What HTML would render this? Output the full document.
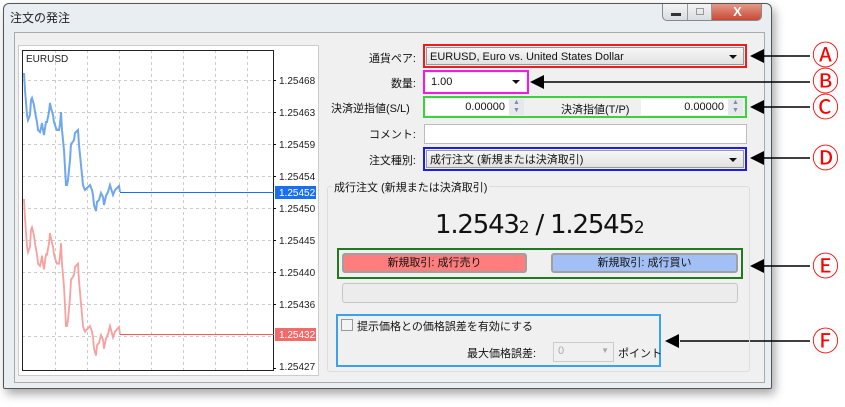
<!DOCTYPE html>
<html><head><meta charset="utf-8"><style>
*{box-sizing:border-box;margin:0;padding:0}
body{width:845px;height:407px;background:#fff;position:relative;overflow:hidden;font-family:"Liberation Sans","Noto Sans CJK JP",sans-serif;font-size:11px;color:#111}
.a{position:absolute}
.win{left:3px;top:3px;width:769px;height:386px;background:#e9eef3;border:1px solid #555;border-radius:6px 6px 2px 2px;box-shadow:3px 5px 10px rgba(0,0,0,.35)}
.client{left:14px;top:32px;width:751px;height:351px;background:#f0f0f0;border:1px solid #aaa}
.lbl{text-align:right;width:110px;left:306px}
.field{background:#fff;border:1px solid #bbb}
.combo{background:linear-gradient(#f6f6f6,#e2e2e2);border:1px solid #999;line-height:14px}
.tri{position:absolute;right:6px;top:7px;width:0;height:0;border-left:4px solid transparent;border-right:4px solid transparent;border-top:4px solid #111}
.circ{font-size:27px;color:#f00;left:812px;line-height:1;font-family:"DejaVu Sans",sans-serif}
</style></head><body>
<div class="a win"></div>
<div class="a" style="left:10px;top:9px;font-size:12px;color:#222">注文の発注</div>
<div class="a" style="left:662px;top:4px;width:100px;height:17px;border:1px solid #888;border-top:none;border-radius:0 0 5px 5px;background:linear-gradient(#f4f4f4,#d8dde2);overflow:hidden">
 <div class="a" style="left:0;top:0;width:25px;height:17px;border-right:1px solid #999"><div class="a" style="left:8px;top:9px;width:10px;height:3px;background:#333"></div></div>
 <div class="a" style="left:25px;top:0;width:24px;height:17px;border-right:1px solid #999"><div class="a" style="left:8px;top:4px;width:8px;height:7px;border:1px solid #999"></div></div>
 <div class="a" style="left:49px;top:0;width:51px;height:17px;background:linear-gradient(#e49a8a,#c7432f);color:#fff;font-weight:bold;font-size:13px;text-align:center;line-height:16px">X</div>
</div>
<div class="a client"></div>
<div class="a" style="left:18px;top:45px;width:301px;height:331px;background:#fff;border:1px solid #ccc"></div>
<svg class="a" style="left:0;top:0" width="845" height="407">
 <g stroke="#ccc" stroke-dasharray="3,3" stroke-width="1">
  <line x1="55.5" y1="50" x2="55.5" y2="370"/><line x1="87.5" y1="50" x2="87.5" y2="370"/><line x1="119.5" y1="50" x2="119.5" y2="370"/><line x1="151.5" y1="50" x2="151.5" y2="370"/><line x1="183.5" y1="50" x2="183.5" y2="370"/><line x1="215.5" y1="50" x2="215.5" y2="370"/><line x1="247.5" y1="50" x2="247.5" y2="370"/>
  <line x1="22" y1="80.5" x2="273" y2="80.5"/><line x1="22" y1="112.5" x2="273" y2="112.5"/><line x1="22" y1="144.5" x2="273" y2="144.5"/><line x1="22" y1="176.5" x2="273" y2="176.5"/><line x1="22" y1="208.5" x2="273" y2="208.5"/><line x1="22" y1="240.5" x2="273" y2="240.5"/><line x1="22" y1="272.5" x2="273" y2="272.5"/><line x1="22" y1="304.5" x2="273" y2="304.5"/><line x1="22" y1="336.5" x2="273" y2="336.5"/>
 </g>
 <rect x="22.5" y="50.5" width="251" height="320" fill="none" stroke="#222"/>
 <g stroke="#111"><line x1="273" y1="80.5" x2="276" y2="80.5"/><line x1="273" y1="112.5" x2="276" y2="112.5"/><line x1="273" y1="144.5" x2="276" y2="144.5"/><line x1="273" y1="176.5" x2="276" y2="176.5"/><line x1="273" y1="208.5" x2="276" y2="208.5"/><line x1="273" y1="240.5" x2="276" y2="240.5"/><line x1="273" y1="272.5" x2="276" y2="272.5"/><line x1="273" y1="304.5" x2="276" y2="304.5"/><line x1="273" y1="368.5" x2="276" y2="368.5"/></g>
 <polyline fill="none" stroke="#6fa6f0" stroke-width="2" points="24,73 25,90 27,115 28,120 30,115 31,100 32,98 34,105 35,112 37,122 38,130 40,132 41,128 42,123 43,130 44,135 45,128 46,122 47,122 49,112 50,103 51,108 53,115 54,122 56,128 57,130 59,130 60,124 61,112 62,130 64,150 66,185 67,185 68,180 70,160 71,144 72,143 74,140 75,133 78,130 79,145 81,165 83,185 84,188 85,190 87,188 90,185 92,190 93,195 94,205 96,211 97,202 99,200 101,193 103,197 104,205 106,196 108,192 110,185 113,195 115,190 119,186 120,192"/>
 <line x1="120" y1="192.5" x2="274" y2="192.5" stroke="#1a6ff0"/>
 <g transform="translate(0,199) scale(1,1.134) translate(0,-73)"><polyline fill="none" stroke="#f7a0a0" stroke-width="1.8" points="24,73 25,90 27,115 28,120 30,115 31,100 32,98 34,105 35,112 37,122 38,130 40,132 41,128 42,123 43,130 44,135 45,128 46,122 47,122 49,112 50,103 51,108 53,115 54,122 56,128 57,130 59,130 60,124 61,112 62,130 64,150 66,185 67,185 68,180 70,160 71,144 72,143 74,140 75,133 78,130 79,145 81,165 83,185 84,188 85,190 87,188 90,185 92,190 93,195 94,205 96,211 97,202 99,200 101,193 103,197 104,205 106,196 108,192 110,185 113,195 115,190 119,186 120,192"/></g>
 <line x1="120" y1="334.5" x2="274" y2="334.5" stroke="#f05a5a"/>
 <rect x="275" y="186" width="41" height="13" fill="#1a6ff0"/>
 <rect x="275" y="328" width="41" height="13" fill="#f26b6b"/>
 <g font-family="Liberation Sans,sans-serif" font-size="10" fill="#222">
  <text x="26" y="62" font-size="10">EURUSD</text>
  <text x="279" y="84">1.25468</text><text x="279" y="116">1.25463</text><text x="279" y="148">1.25459</text><text x="279" y="180">1.25454</text>
  <text x="279" y="196" fill="#fff">1.25452</text>
  <text x="279" y="212">1.25450</text><text x="279" y="244">1.25445</text><text x="279" y="276">1.25440</text><text x="279" y="308">1.25436</text>
  <text x="279" y="338" fill="#fff">1.25432</text><text x="279" y="370">1.25427</text>
 </g>
 <g stroke="#000" stroke-width="1.5"><line x1="760" y1="56" x2="810" y2="56"/><line x1="540" y1="82" x2="810" y2="82"/><line x1="760" y1="107" x2="810" y2="107"/><line x1="760" y1="158" x2="810" y2="158"/><line x1="760" y1="266" x2="810" y2="266"/><line x1="680" y1="341" x2="810" y2="341"/></g>
 <g fill="#000"><polygon points="750,56 764,49 764,63"/><polygon points="530,82 544,75 544,89"/><polygon points="750,107 764,100 764,114"/><polygon points="750,158 764,151 764,165"/><polygon points="750,266 764,259 764,273"/><polygon points="665,341 679,334 679,348"/></g>
</svg>
<div class="a circ" style="top:43px">Ⓐ</div>
<div class="a circ" style="top:69px">Ⓑ</div>
<div class="a circ" style="top:95px">Ⓒ</div>
<div class="a circ" style="top:146px">Ⓓ</div>
<div class="a circ" style="top:254px">Ⓔ</div>
<div class="a circ" style="top:329px">Ⓕ</div>

<div class="a lbl" style="top:50px">通貨ペア:</div>
<div class="a lbl" style="top:75px">数量:</div>
<div class="a" style="left:331px;top:100px">決済逆指値(S/L)</div>
<div class="a lbl" style="top:126px">コメント:</div>
<div class="a lbl" style="top:152px">注文種別:</div>

<div class="a" style="left:423px;top:44px;width:324px;height:24px;border:2px solid #f01c1c"><div class="a combo" style="left:1px;top:1px;right:1px;bottom:1px;padding:2px 3px">EURUSD, Euro vs. United States Dollar<div class="tri"></div></div></div>
<div class="a" style="left:423px;top:70px;width:106px;height:24px;border:2px solid #f01ce6"><div class="a field" style="left:1px;top:1px;right:1px;bottom:1px;border:none;padding:3px 5px">1.00<div class="tri"></div></div></div>
<div class="a" style="left:423px;top:96px;width:324px;height:22px;border:2px solid #3cd23c;background:#f0f0f0">
 <div class="a field" style="left:1px;top:1px;width:83px;height:16px;border:none;text-align:right;padding:2px 4px">0.00000</div>
 <div class="a" style="left:84px;top:1px;width:15px;height:16px;background:#e6e8ec;color:#7a8fb0;font-size:7px;text-align:center;line-height:8px">▲<br>▼</div>
 <div class="a" style="left:136px;top:3px">決済指値(T/P)</div>
 <div class="a field" style="left:216px;top:1px;width:87px;height:16px;border:none;text-align:right;padding:2px 4px">0.00000</div>
 <div class="a" style="left:303px;top:1px;width:15px;height:16px;background:#e6e8ec;color:#7a8fb0;font-size:7px;text-align:center;line-height:8px">▲<br>▼</div>
</div>
<div class="a field" style="left:424px;top:124px;width:323px;height:20px"></div>
<div class="a" style="left:423px;top:147px;width:324px;height:24px;border:2px solid #1c1cf0"><div class="a combo" style="left:1px;top:1px;right:1px;bottom:1px;padding:2px 3px">成行注文 (新規または決済取引)<div class="tri"></div></div></div>

<div class="a" style="left:327px;top:186px;width:423px;height:186px;border:1px solid #ddd;border-radius:3px"></div>
<div class="a" style="left:332px;top:179px;background:#f0f0f0;padding:0 2px">成行注文 (新規または決済取引)</div>
<div class="a" style="left:435px;top:210px;font-size:26px;font-family:'DejaVu Sans',sans-serif;letter-spacing:-1.2px;color:#111">1.2543<span style="font-size:17px">2</span> / 1.2545<span style="font-size:17px">2</span></div>

<div class="a" style="left:337px;top:248px;width:406px;height:31px;border:2px solid #1f7a1f"></div>
<div class="a" style="left:342px;top:253px;width:185px;height:20px;background:#ff7d7d;border:2px solid #a0a0a0;border-radius:3px;text-align:center;line-height:16px">新規取引: 成行売り</div>
<div class="a" style="left:551px;top:253px;width:187px;height:20px;background:#a2c0f5;border:2px solid #a0a0a0;border-radius:3px;text-align:center;line-height:16px">新規取引: 成行買い</div>
<div class="a" style="left:342px;top:283px;width:396px;height:20px;border:1px solid #c6c6c6;border-radius:3px;background:#ececec"></div>

<div class="a" style="left:336px;top:314px;width:325px;height:53px;border:2px solid #3aa0f0"></div>
<div class="a" style="left:341px;top:319px;width:12px;height:12px;border:1px solid #999;background:#f4f4f4"></div>
<div class="a" style="left:357px;top:318px">提示価格との価格誤差を有効にする</div>
<div class="a" style="left:467px;top:345px">最大価格誤差:</div>
<div class="a" style="left:553px;top:342px;width:61px;height:20px;border:1px solid #ccc;background:#f0f0f0;color:#aaa;padding:2px 4px">0<span style="position:absolute;right:4px;top:3px;color:#aaa;font-size:8px">▼</span></div>
<div class="a" style="left:618px;top:345px">ポイント</div>
</body></html>
